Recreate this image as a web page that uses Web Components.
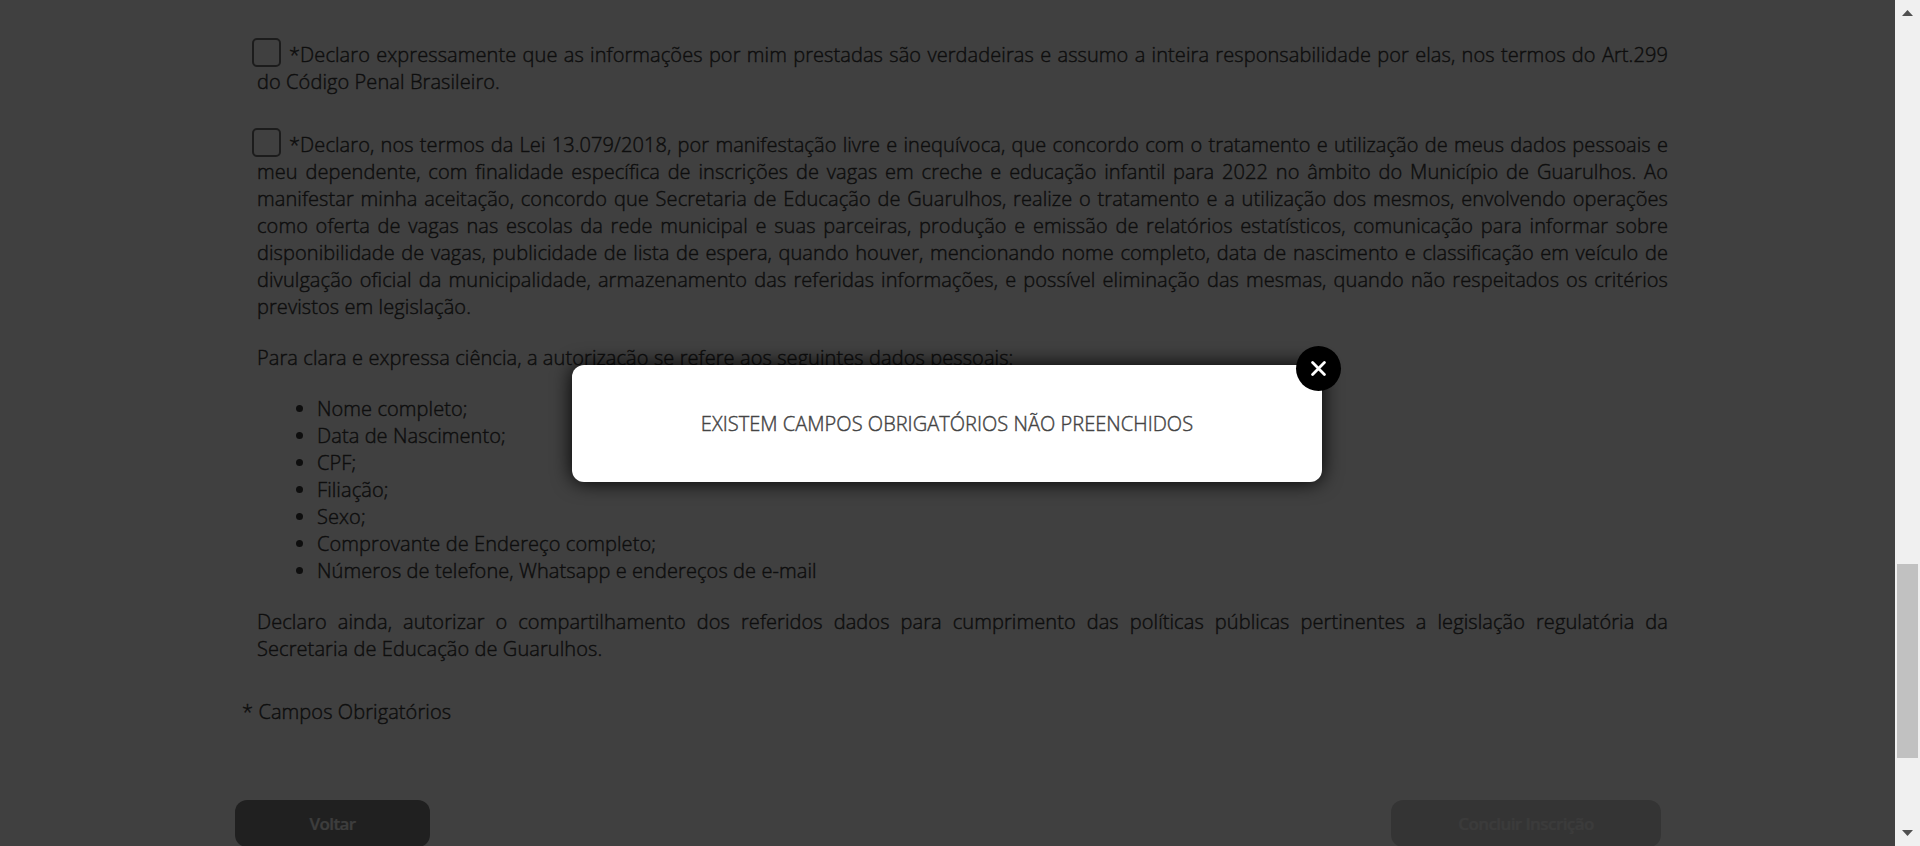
<!DOCTYPE html>
<html lang="pt-BR">
<head>
<meta charset="utf-8">
<title>Inscrição</title>
<style>
html,body{margin:0;height:100%;overflow:hidden;background:#fff}
body{font:300 20px "Open Sans",sans-serif;color:#383838;letter-spacing:.087px;-webkit-text-stroke:.42px}
</style>
</head>
<body>
<app-window>
  <enrollment-form>
    <p><check-box></check-box>*Declaro expressamente que as informações por mim prestadas são verdadeiras e assumo a inteira responsabilidade por elas, nos termos do Art.299 do Código Penal Brasileiro.</p>
    <p><check-box></check-box>*Declaro, nos termos da Lei 13.079/2018, por manifestação livre e inequívoca, que concordo com o tratamento e utilização de meus dados pessoais e meu dependente, com finalidade específica de inscrições de vagas em creche e educação infantil para 2022 no âmbito do Município de Guarulhos. Ao manifestar minha aceitação, concordo que Secretaria de Educação de Guarulhos, realize o tratamento e a utilização dos mesmos, envolvendo operações como oferta de vagas nas escolas da rede municipal e suas parceiras, produção e emissão de relatórios estatísticos, comunicação para informar sobre disponibilidade de vagas, publicidade de lista de espera, quando houver, mencionando nome completo, data de nascimento e classificação em veículo de divulgação oficial da municipalidade, armazenamento das referidas informações, e possível eliminação das mesmas, quando não respeitados os critérios previstos em legislação.</p>
    <data-terms slot="terms"></data-terms>
    <form-button slot="back">Voltar</form-button>
    <form-button slot="submit" disabled>Concluir Inscrição</form-button>
  </enrollment-form>
  <alert-dialog slot="dialog">EXISTEM CAMPOS OBRIGATÓRIOS NÃO PREENCHIDOS</alert-dialog>
  <scroll-rail slot="rail"></scroll-rail>
</app-window>
<script>
const define = (name, html) => customElements.define(name, class extends HTMLElement {
  constructor() {
    super();
    this.attachShadow({mode: 'open'}).innerHTML = html;
  }
});

define('app-window', `<style>
:host{display:grid;grid-template-columns:1fr 25px;height:100vh;overflow:hidden}
.view{position:relative;overflow:hidden;min-width:0}
.overlay{position:absolute;inset:0;background:rgba(0,0,0,.75);display:grid;place-items:center}
</style><div class="view"><slot></slot><div class="overlay"><slot name="dialog"></slot></div></div><slot name="rail"></slot>`);

define('enrollment-form', `<style>
:host{display:block;padding:41px 227px 0 257px;line-height:27px;text-align:justify}
::slotted(p){margin:0 0 36px}
.terms{margin-top:-12px}
.note{margin:36px 0 75px -15px}
.actions{display:flex;justify-content:space-between;margin:0 7px 0 -22px}
</style><slot></slot><div class="terms"><slot name="terms"></slot></div>
<div class="note">* Campos Obrigatórios</div>
<div class="actions"><slot name="back"></slot><slot name="submit"></slot></div>`);

define('data-terms', `<style>
:host{display:block}
p{margin:0}
ul{margin:24px 0;padding:0 0 0 60px}
</style><p>Para clara e expressa ciência, a autorização se refere aos seguintes dados pessoais:</p>
<ul><li>Nome completo;</li><li>Data de Nascimento;</li><li>CPF;</li><li>Filiação;</li><li>Sexo;</li><li>Comprovante de Endereço completo;</li><li>Números de telefone, Whatsapp e endereços de e-mail</li></ul>
<p>Declaro ainda, autorizar o compartilhamento dos referidos dados para cumprimento das políticas públicas pertinentes a legislação regulatória da Secretaria de Educação de Guarulhos.</p>`);

define('check-box', `<style>
:host{display:inline-block;box-sizing:border-box;width:29px;height:29px;border:2px solid #707070;border-radius:5px;margin:-3px 8px 1px -5px;vertical-align:top}
</style>`);

define('form-button', `<style>
:host{display:block;box-sizing:border-box;width:195px;height:47px;border-radius:12px;background:#808080;color:#f4f4f4;font-size:17px;font-weight:600;letter-spacing:-.57px;-webkit-text-stroke:.2px;line-height:48px;text-align:center}
:host([disabled]){width:270px;background:#d0d0d0;color:#ececec}
</style><slot></slot>`);

define('alert-dialog', `<style>
:host{display:block;position:relative;box-sizing:border-box;width:750px;padding:45px;border-radius:12px;background:#fff;box-shadow:0 0 20px #000;line-height:27px;text-align:center;color:#444;letter-spacing:.03px;margin:1px 1px 0 0}
button{position:absolute;top:-19px;right:-19px;width:45px;height:45px;border:0;border-radius:50%;background:#000;padding:0;display:grid;place-items:center}
svg{display:block}
</style><slot></slot><button aria-label="Fechar"><svg width="15" height="15" viewBox="0 0 15 15" fill="none" stroke="#fff" stroke-width="2.8" stroke-linecap="round"><path d="M1.6 1.6 13.4 13.4M13.4 1.6 1.6 13.4"/></svg></button>`);

define('scroll-rail', `<style>
:host{display:grid;grid-template-rows:26px 538px 194px 1fr;background:#f0f0f0}
.thumb{grid-row:3;margin:0 2px;background:#c1c1c1}
svg{display:block;justify-self:center}
.up{grid-row:1;margin-top:10px}.down{grid-row:4;align-self:end;margin-bottom:10px}
</style><svg class="up" width="11" height="6" fill="#505050"><path d="M5.5 0 11 6H0z"/></svg><div class="thumb"></div><svg class="down" width="11" height="6" fill="#505050"><path d="M0 0H11L5.5 6z"/></svg>`);
</script>
</body>
</html>
